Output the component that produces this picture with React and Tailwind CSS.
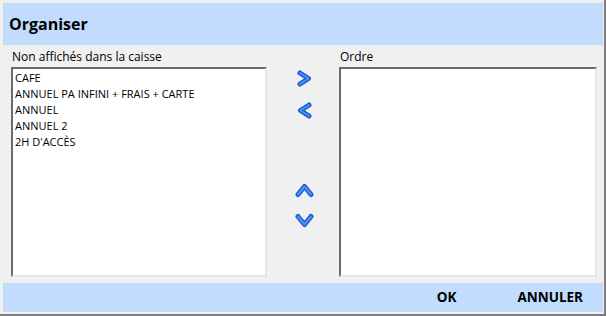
const items = ["CAFE", "ANNUEL PA INFINI + FRAIS + CARTE", "ANNUEL", "ANNUEL 2", "2H D'ACCÈS"];

function Chevron({ dir }) {
  const pts = {
    right: "5,4 13.5,9.5 5,15",
    left: "14,4 5.5,9.5 14,15",
    up: "3,13.5 9.5,5.5 16,13.5",
    down: "3,5.5 9.5,13.5 16,5.5",
  }[dir];
  return (
    <svg width="19" height="19" viewBox="0 0 19 19">
      <polyline points={pts} fill="none" stroke="#1c5ad4" strokeWidth="5" strokeLinecap="round" strokeLinejoin="round" />
      <polyline points={pts} fill="none" stroke="#4f92f0" strokeWidth="2" strokeLinecap="round" strokeLinejoin="round" />
    </svg>
  );
}

function ListBox({ className, children }) {
  return (
    <div
      className={
        "h-[210px] bg-white border-2 border-t-[#6b6b6b] border-l-[#6b6b6b] border-r-[#e6e6e6] border-b-[#e6e6e6] pl-[2px] pt-[1px] " +
        className
      }
    >
      {children}
    </div>
  );
}

export default function App() {
  return (
    <div
      className="w-[606px] h-[316px] bg-[#f0f0f0] flex flex-col pt-[3px] pl-[3px] border-r-2 border-b-2 border-[#7c7c7c] text-[#000]"
      style={{ fontFamily: '"Open Sans", "Noto Sans", sans-serif' }}
    >
      <div className="h-[42px] bg-[#c1dcfd] mr-[1px] flex items-center pl-[6px] text-[16px] font-bold">
        Organiser
      </div>

      <div className="flex-1 flex pt-[5px]">
        <div className="ml-[8px] w-[256px] flex flex-col">
          <div className="h-[17px] text-[12px] leading-[14px] pl-[1px]">Non affichés dans la caisse</div>
          <ListBox className="w-[256px]">
            {items.map((it) => (
              <div key={it} className="text-[11px] leading-[16px] h-[16px]">
                {it}
              </div>
            ))}
          </ListBox>
        </div>

        <div className="w-[72px] flex flex-col items-center pt-[19px] pl-[2px]">
          <Chevron dir="right" />
          <div className="h-[13px]" />
          <Chevron dir="left" />
          <div className="h-[61px]" />
          <Chevron dir="up" />
          <div className="h-[11px]" />
          <Chevron dir="down" />
        </div>

        <div className="w-[258px] flex flex-col">
          <div className="h-[17px] text-[12px] leading-[14px] pl-[1px]">Ordre</div>
          <ListBox className="w-[258px]" />
        </div>
      </div>

      <div className="h-[29px] bg-[#c1dcfd] mr-[1px] mb-[2px] flex items-center justify-end pr-[20px] text-[13.5px] font-bold">
        <span className="mr-[61px]">OK</span>
        <span>ANNULER</span>
      </div>
    </div>
  );
}
